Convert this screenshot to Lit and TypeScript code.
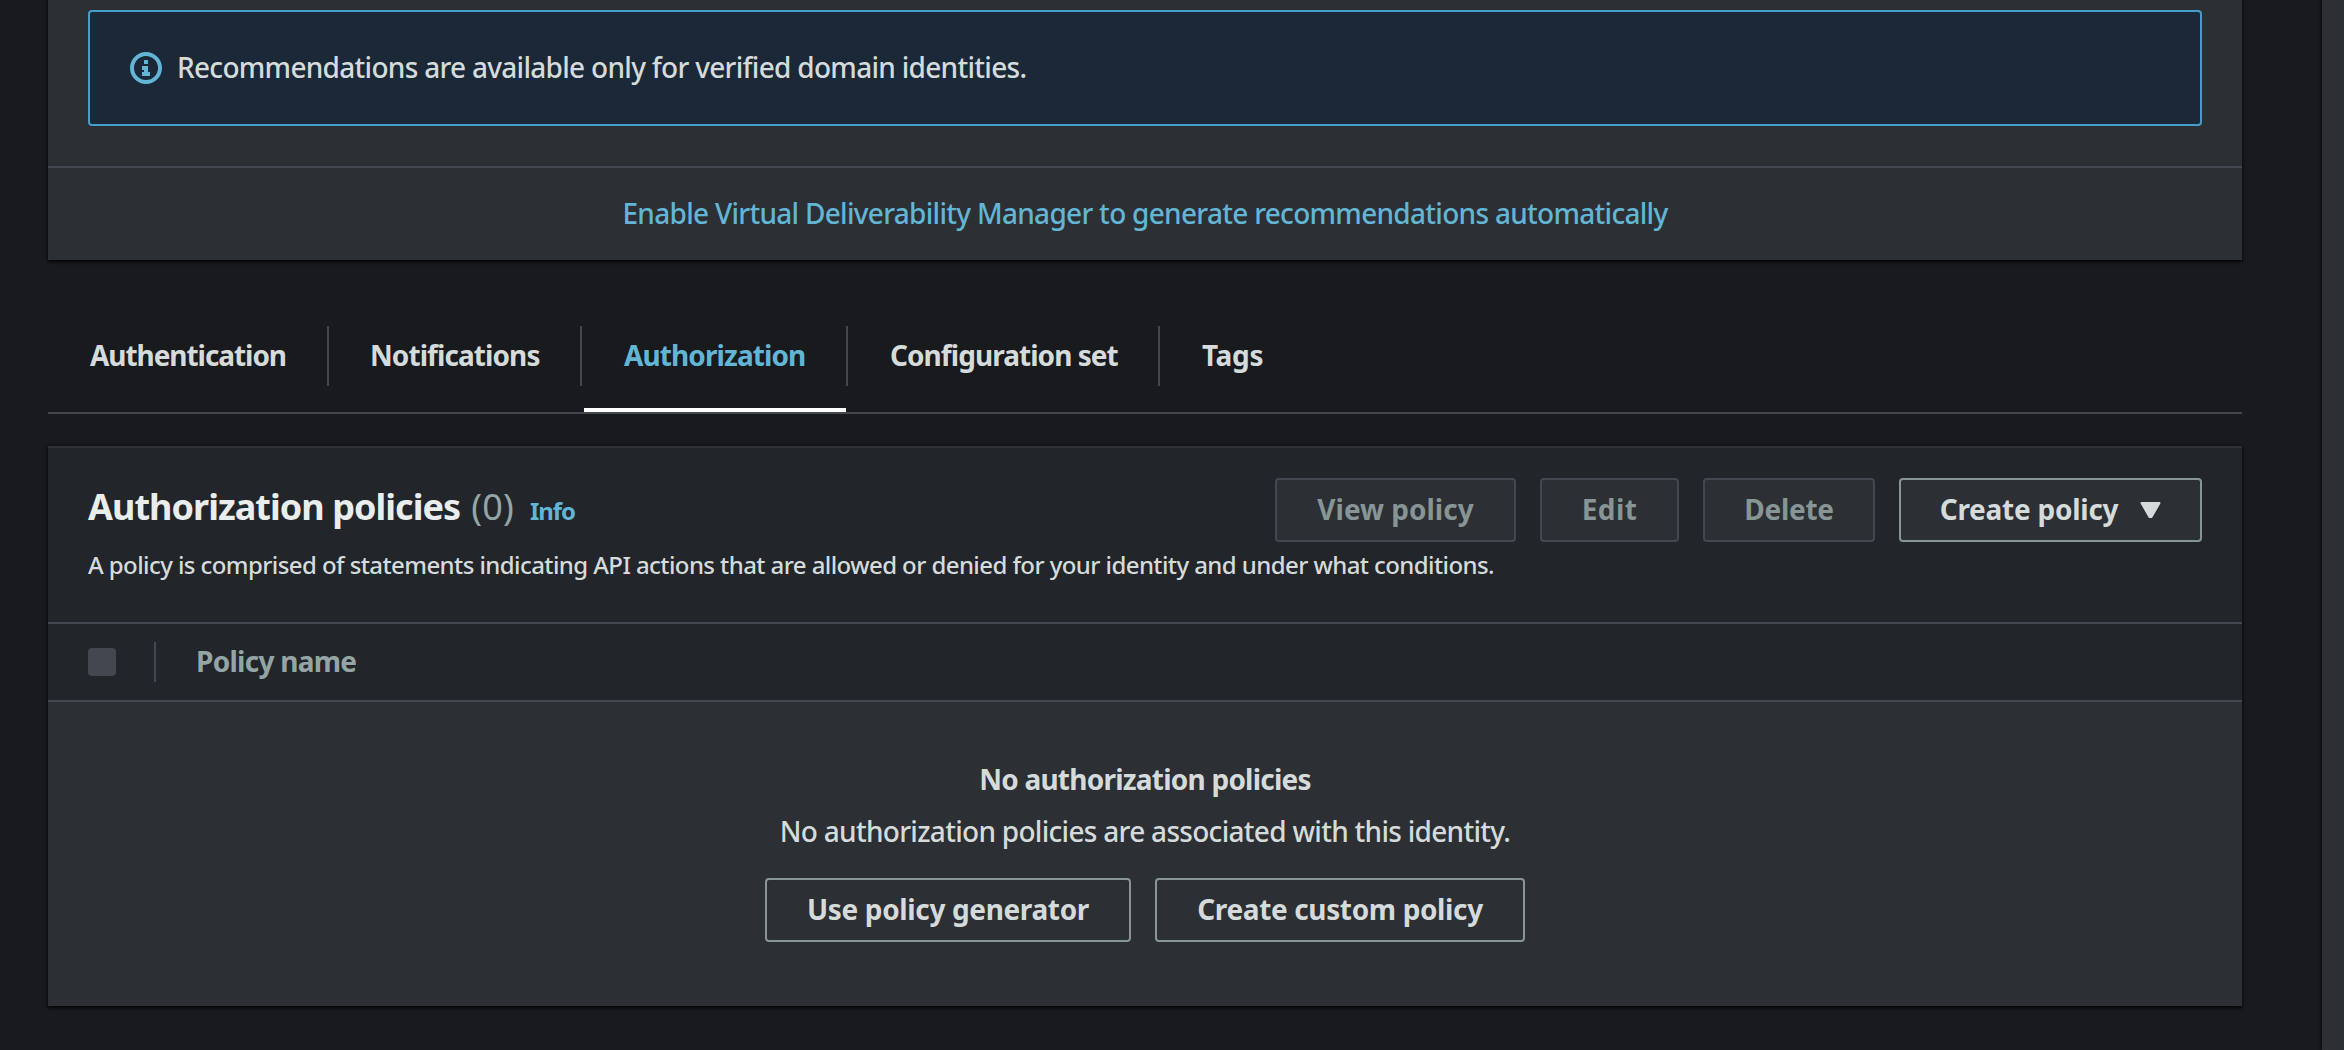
import { LitElement, html, css, nothing } from "lit";
import { customElement, property, state } from "lit/decorators.js";
import { classMap } from "lit/directives/class-map.js";

@customElement("status-alert")
class StatusAlert extends LitElement {
  static styles = css`
    :host {
      display: flex;
      align-items: center;
      box-sizing: border-box;
      height: 116px;
      padding: 0 40px;
      border: 2px solid #449fc8;
      border-radius: 4px;
      background: #1a2838;
      color: #d5dbdb;
    }
    .icon {
      flex: none;
      width: 32px;
      height: 32px;
      margin-right: 14px;
    }
    .ring {
      fill: none;
      stroke: #63b5d5;
      stroke-width: 4;
    }
    .glyph {
      fill: #63b5d5;
    }
    .message {
      padding: 0 0 2px 1px;
    }
  `;

  render() {
    return html`
      <svg class="icon" viewBox="0 0 32 32">
        <circle class="ring" cx="16" cy="16" r="14" />
        <path class="glyph" d="M14 8h4v4h-4zM12 14h6v6h2v4h-8v-4h2v-2h-2z" />
      </svg>
      <div class="message"><slot></slot></div>
    `;
  }
}

@customElement("action-button")
class ActionButton extends LitElement {
  @property({ type: Boolean, reflect: true }) disabled = false;
  @property({ type: Boolean }) menu = false;

  static styles = css`
    :host {
      display: inline-flex;
      flex: none;
    }
    .button {
      display: flex;
      flex: 1;
      align-items: center;
      justify-content: center;
      box-sizing: border-box;
      height: 64px;
      padding: 0;
      border: 2px solid #879596;
      border-radius: 4px;
      background: #2c2f33;
      color: #d5dbdb;
      font: inherit;
      font-weight: 700;
      line-height: 40px;
      letter-spacing: inherit;
      white-space: nowrap;
    }
    .button:disabled {
      border-color: #434850;
      color: #879596;
    }
    .label {
      padding-bottom: 2px;
    }
    .caret {
      width: 21px;
      height: 16px;
      margin-left: 22px;
      fill: #d5dbdb;
      stroke: #d5dbdb;
      stroke-width: 2;
      stroke-linejoin: round;
    }
  `;

  render() {
    return html`
      <button class="button" type="button" ?disabled=${this.disabled}>
        <span class="label"><slot></slot></span>
        ${this.menu
          ? html`<svg class="caret" viewBox="0 0 21 16"><path d="M1.5 1h18l-8 14h-2z" /></svg>`
          : nothing}
      </button>
    `;
  }
}

@customElement("app-root")
class AppRoot extends LitElement {
  @state() private activeTab = "Authorization";

  private tabs = ["Authentication", "Notifications", "Authorization", "Configuration set", "Tags"];

  static styles = css`
    :host {
      display: flex;
      justify-content: space-between;
      height: 1050px;
      overflow: hidden;
      background: #191a1e;
      color: #d5dbdb;
      font-family: "Noto Sans", "Open Sans", sans-serif;
      font-size: 28px;
      font-weight: 500;
      line-height: 40px;
      letter-spacing: -0.71px;
    }
    .main {
      width: 2194px;
      margin-left: 48px;
    }
    .side {
      width: 22px;
      background: #2c2f33;
      box-shadow: -1px 0 3px rgba(0, 0, 0, 0.75);
    }
    .card {
      background: #2c2f33;
      box-shadow: 0 2px 3px rgba(0, 0, 0, 0.75), 0 0 3px rgba(0, 0, 0, 0.5);
    }
    .recommendations {
      padding: 10px 40px 40px;
      border-bottom: 2px solid #434850;
    }
    .footer {
      display: flex;
      align-items: center;
      justify-content: center;
      box-sizing: border-box;
      height: 92px;
      padding-bottom: 2px;
    }
    .link {
      color: #63b5d5;
      text-decoration: none;
    }

    .tabs {
      display: flex;
      box-sizing: border-box;
      height: 88px;
      margin-top: 66px;
      border-bottom: 2px solid #434850;
      font-weight: 700;
    }
    .tab {
      position: relative;
      padding: 0;
      border: 0;
      background: none;
      color: #d5dbdb;
      font: inherit;
      letter-spacing: -1px;
      text-align: left;
      white-space: nowrap;
    }
    .tab-label {
      display: flex;
      align-items: center;
      box-sizing: border-box;
      height: 60px;
      margin-bottom: 26px;
      padding: 0 0 2px 42px;
      border-right: 2px solid #434850;
    }
    .tab:nth-child(1) {
      width: 281px;
      letter-spacing: -1.06px;
    }
    .tab:nth-child(2) {
      width: 253px;
      letter-spacing: -0.92px;
    }
    .tab:nth-child(3) {
      width: 266px;
      letter-spacing: -0.9px;
    }
    .tab:nth-child(4) {
      width: 312px;
      letter-spacing: -0.95px;
    }
    .tab:nth-child(5) {
      letter-spacing: -0.3px;
    }
    .tab:nth-child(2) .tab-label {
      padding-left: 41px;
    }
    .tab:last-child .tab-label {
      border-right: 0;
    }
    .active {
      color: #63b5d5;
    }
    .active::after {
      content: "";
      position: absolute;
      right: 2px;
      bottom: 0;
      left: 2px;
      height: 4px;
      background: #fff;
    }

    .policies {
      box-sizing: border-box;
      height: 560px;
      margin-top: 32px;
    }
    .header {
      display: flex;
      justify-content: space-between;
      box-sizing: border-box;
      height: 178px;
      padding: 30px 40px 0;
      border-top: 2px solid #2e3136;
      border-bottom: 2px solid #434850;
      background: #22252a;
    }
    .title-row {
      display: flex;
      align-items: baseline;
      height: 48px;
      margin-top: 5px;
    }
    .title {
      margin: 0 11px 0 0;
      color: #eaeded;
      font-size: 36px;
      font-weight: 700;
      line-height: 48px;
      letter-spacing: -0.96px;
    }
    .count {
      margin-right: 16px;
      color: #95a5a6;
      font-size: 36px;
      font-weight: 400;
      line-height: 48px;
      letter-spacing: 0.2px;
    }
    .info {
      font-size: 24px;
      font-weight: 700;
      letter-spacing: -1.1px;
    }
    .description {
      margin: 16px 0 0;
      font-size: 24px;
      line-height: 36px;
      letter-spacing: -0.585px;
      white-space: nowrap;
    }
    .heading-block {
      width: 1000px;
    }
    .actions {
      display: flex;
      gap: 24px;
    }
    .view {
      width: 241px;
      letter-spacing: 0;
    }
    .edit {
      width: 139px;
      letter-spacing: 0.4px;
    }
    .delete {
      width: 172px;
      letter-spacing: -0.3px;
    }
    .create {
      width: 303px;
      letter-spacing: -0.25px;
    }

    .columns {
      display: flex;
      align-items: center;
      box-sizing: border-box;
      height: 78px;
      padding: 0 40px;
      border-bottom: 2px solid #434850;
      background: #22252a;
      color: #95a5a6;
      font-weight: 700;
      letter-spacing: -0.73px;
    }
    .checkbox {
      width: 28px;
      height: 28px;
      border-radius: 4px;
      background: #434850;
    }
    .column {
      display: flex;
      align-items: center;
      height: 40px;
      margin-left: 38px;
      padding-left: 40px;
      border-left: 2px solid #434850;
    }
    .column-label {
      padding-bottom: 2px;
    }

    .empty {
      display: flex;
      flex-direction: column;
      align-items: center;
      padding-top: 57px;
    }
    .empty-title {
      font-weight: 700;
      letter-spacing: -0.77px;
    }
    .empty-text {
      margin: 12px 0 27px;
    }
    .generator {
      width: 366px;
      letter-spacing: -0.36px;
    }
    .custom {
      width: 370px;
      letter-spacing: -0.36px;
    }
  `;

  render() {
    return html`
      <main class="main">
        <section class="card">
          <div class="recommendations">
            <status-alert>Recommendations are available only for verified domain identities.</status-alert>
          </div>
          <div class="footer">
            <a class="link">Enable Virtual Deliverability Manager to generate recommendations automatically</a>
          </div>
        </section>

        <nav class="tabs">
          ${this.tabs.map(
            (tab) => html`
              <button
                type="button"
                class=${classMap({ tab: true, active: tab === this.activeTab })}
                @click=${() => (this.activeTab = tab)}
              ><span class="tab-label">${tab}</span></button>
            `
          )}
        </nav>

        <section class="card policies">
          <header class="header">
            <div class="heading-block">
              <div class="title-row">
                <h2 class="title">Authorization policies</h2>
                <span class="count">(0)</span>
                <a class="link info">Info</a>
              </div>
              <p class="description">A policy is comprised of statements indicating API actions that are allowed or denied for your identity and under what conditions.</p>
            </div>
            <div class="actions">
              <action-button class="view" disabled>View policy</action-button>
              <action-button class="edit" disabled>Edit</action-button>
              <action-button class="delete" disabled>Delete</action-button>
              <action-button class="create" menu>Create policy</action-button>
            </div>
          </header>
          <div class="columns">
            <span class="checkbox"></span>
            <div class="column"><span class="column-label">Policy name</span></div>
          </div>
          <div class="empty">
            <div class="empty-title">No authorization policies</div>
            <div class="empty-text">No authorization policies are associated with this identity.</div>
            <div class="actions">
              <action-button class="generator">Use policy generator</action-button>
              <action-button class="custom">Create custom policy</action-button>
            </div>
          </div>
        </section>
      </main>
      <aside class="side"></aside>
    `;
  }
}
